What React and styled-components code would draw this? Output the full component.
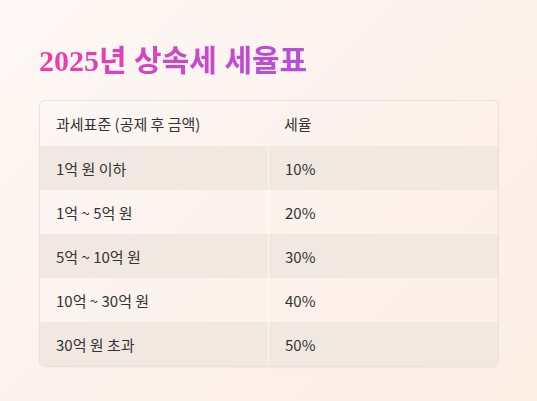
import React from 'react';
import styled, { createGlobalStyle } from 'styled-components';

const GlobalStyle = createGlobalStyle`
  html, body {
    margin: 0;
    padding: 0;
  }
  body {
    min-height: 401px;
    background: linear-gradient(135deg, #fdf8f6 0%, #fdf1eb 60%, #fdefe6 100%);
    font-family: "Noto Sans CJK KR", "Noto Sans", sans-serif;
    color: #333;
  }
`;

const Page = styled.div`
  padding: 38px 40px 0 39px;
`;

const Title = styled.h1`
  margin: 0 0 16px;
  font-family: "Liberation Serif", "Noto Sans CJK KR", serif;
  font-size: 30px;
  font-weight: 700;
  line-height: 46px;
  background: linear-gradient(90deg, #f03ca8 0%, #d044c8 50%, #b450dc 100%);
  -webkit-background-clip: text;
  background-clip: text;
  color: transparent;
  display: inline-block;
`;

const Table = styled.div`
  width: 458px;
  border: 1px solid #ece1db;
  border-radius: 6px;
  overflow: hidden;
  box-shadow: 0 1px 2px rgba(120, 80, 60, 0.05);
`;

const Row = styled.div`
  display: grid;
  grid-template-columns: 228px 1fr;
  height: ${({ header }) => (header ? '45px' : '44px')};
  background: ${({ striped }) => (striped ? '#f2e8e2' : 'transparent')};
`;

const Cell = styled.div`
  display: flex;
  align-items: center;
  padding-left: 16px;
  font-size: 15px;
  color: #333;
  border-left: ${({ divided, header }) =>
    divided && !header ? '1px solid rgba(255, 255, 255, 0.55)' : 'none'};
`;

const rates = [
  { range: '1억 원 이하', rate: '10%' },
  { range: '1억 ~ 5억 원', rate: '20%' },
  { range: '5억 ~ 10억 원', rate: '30%' },
  { range: '10억 ~ 30억 원', rate: '40%' },
  { range: '30억 원 초과', rate: '50%' },
];

const App = () => (
  <>
    <GlobalStyle />
    <Page>
      <Title>2025년 상속세 세율표</Title>
      <Table>
        <Row header>
          <Cell>과세표준 (공제 후 금액)</Cell>
          <Cell divided header>세율</Cell>
        </Row>
        {rates.map((r, i) => (
          <Row key={r.rate} striped={i % 2 === 0}>
            <Cell>{r.range}</Cell>
            <Cell divided>{r.rate}</Cell>
          </Row>
        ))}
      </Table>
    </Page>
  </>
);

export default App;
